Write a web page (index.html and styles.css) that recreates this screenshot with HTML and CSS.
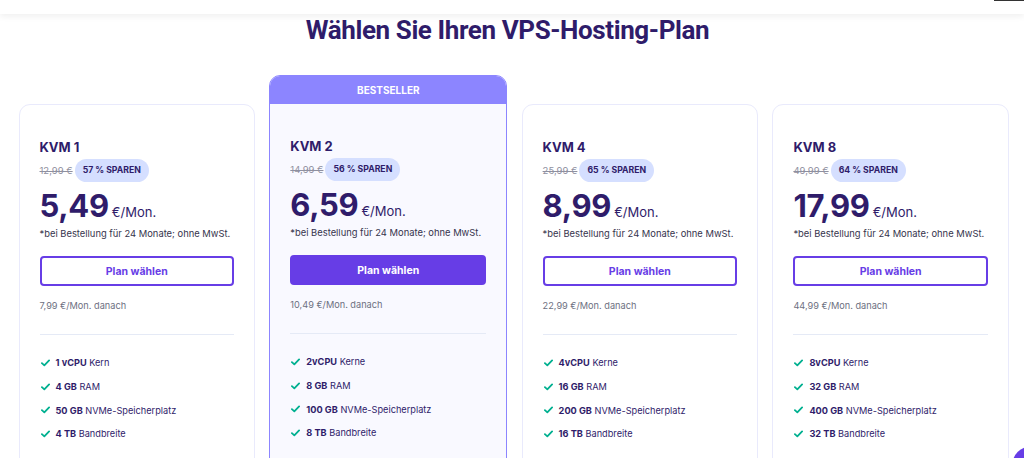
FILE: index.html
```html
<!DOCTYPE html>
<html lang="de">
<head>
<meta charset="utf-8">
<title>VPS-Hosting-Plan</title>
<link rel="stylesheet" href="styles.css">
</head>
<body>
<div class="topbar"><span class="topline"></span></div>
<h1 class="heading">Wählen Sie Ihren VPS-Hosting-Plan</h1>
<div class="plans">
  <div class="card">
    <div class="card-body">
      <div class="plan-name">KVM 1</div>
      <div class="price-row"><span class="old">12,99 €</span><span class="badge">57 % SPAREN</span></div>
      <div class="price"><span class="amount">5,49</span><span class="unit">€/Mon.</span></div>
      <div class="note">*bei Bestellung für 24 Monate; ohne MwSt.</div>
      <button class="btn">Plan wählen</button>
      <div class="renew">7,99 €/Mon. danach</div>
      <hr class="sep">
      <ul class="features">
        <li><svg class="check" viewBox="0 0 10 8"><path d="M1 4.2 3.7 6.6 9 1.2"/></svg><b>1 vCPU</b>&nbsp;Kern</li>
        <li><svg class="check" viewBox="0 0 10 8"><path d="M1 4.2 3.7 6.6 9 1.2"/></svg><b>4 GB</b>&nbsp;RAM</li>
        <li><svg class="check" viewBox="0 0 10 8"><path d="M1 4.2 3.7 6.6 9 1.2"/></svg><b>50 GB</b>&nbsp;NVMe-Speicherplatz</li>
        <li><svg class="check" viewBox="0 0 10 8"><path d="M1 4.2 3.7 6.6 9 1.2"/></svg><b>4 TB</b>&nbsp;Bandbreite</li>
      </ul>
    </div>
  </div>
  <div class="card featured">
    <div class="ribbon">BESTSELLER</div>
    <div class="card-body">
      <div class="plan-name">KVM 2</div>
      <div class="price-row"><span class="old">14,99 €</span><span class="badge">56 % SPAREN</span></div>
      <div class="price"><span class="amount">6,59</span><span class="unit">€/Mon.</span></div>
      <div class="note">*bei Bestellung für 24 Monate; ohne MwSt.</div>
      <button class="btn btn-filled">Plan wählen</button>
      <div class="renew">10,49 €/Mon. danach</div>
      <hr class="sep">
      <ul class="features">
        <li><svg class="check" viewBox="0 0 10 8"><path d="M1 4.2 3.7 6.6 9 1.2"/></svg><b>2vCPU</b>&nbsp;Kerne</li>
        <li><svg class="check" viewBox="0 0 10 8"><path d="M1 4.2 3.7 6.6 9 1.2"/></svg><b>8 GB</b>&nbsp;RAM</li>
        <li><svg class="check" viewBox="0 0 10 8"><path d="M1 4.2 3.7 6.6 9 1.2"/></svg><b>100 GB</b>&nbsp;NVMe-Speicherplatz</li>
        <li><svg class="check" viewBox="0 0 10 8"><path d="M1 4.2 3.7 6.6 9 1.2"/></svg><b>8 TB</b>&nbsp;Bandbreite</li>
      </ul>
    </div>
  </div>
  <div class="card">
    <div class="card-body">
      <div class="plan-name">KVM 4</div>
      <div class="price-row"><span class="old">25,99 €</span><span class="badge">65 % SPAREN</span></div>
      <div class="price"><span class="amount">8,99</span><span class="unit">€/Mon.</span></div>
      <div class="note">*bei Bestellung für 24 Monate; ohne MwSt.</div>
      <button class="btn">Plan wählen</button>
      <div class="renew">22,99 €/Mon. danach</div>
      <hr class="sep">
      <ul class="features">
        <li><svg class="check" viewBox="0 0 10 8"><path d="M1 4.2 3.7 6.6 9 1.2"/></svg><b>4vCPU</b>&nbsp;Kerne</li>
        <li><svg class="check" viewBox="0 0 10 8"><path d="M1 4.2 3.7 6.6 9 1.2"/></svg><b>16 GB</b>&nbsp;RAM</li>
        <li><svg class="check" viewBox="0 0 10 8"><path d="M1 4.2 3.7 6.6 9 1.2"/></svg><b>200 GB</b>&nbsp;NVMe-Speicherplatz</li>
        <li><svg class="check" viewBox="0 0 10 8"><path d="M1 4.2 3.7 6.6 9 1.2"/></svg><b>16 TB</b>&nbsp;Bandbreite</li>
      </ul>
    </div>
  </div>
  <div class="card">
    <div class="card-body">
      <div class="plan-name">KVM 8</div>
      <div class="price-row"><span class="old">49,99 €</span><span class="badge">64 % SPAREN</span></div>
      <div class="price"><span class="amount">17,99</span><span class="unit">€/Mon.</span></div>
      <div class="note">*bei Bestellung für 24 Monate; ohne MwSt.</div>
      <button class="btn">Plan wählen</button>
      <div class="renew">44,99 €/Mon. danach</div>
      <hr class="sep">
      <ul class="features">
        <li><svg class="check" viewBox="0 0 10 8"><path d="M1 4.2 3.7 6.6 9 1.2"/></svg><b>8vCPU</b>&nbsp;Kerne</li>
        <li><svg class="check" viewBox="0 0 10 8"><path d="M1 4.2 3.7 6.6 9 1.2"/></svg><b>32 GB</b>&nbsp;RAM</li>
        <li><svg class="check" viewBox="0 0 10 8"><path d="M1 4.2 3.7 6.6 9 1.2"/></svg><b>400 GB</b>&nbsp;NVMe-Speicherplatz</li>
        <li><svg class="check" viewBox="0 0 10 8"><path d="M1 4.2 3.7 6.6 9 1.2"/></svg><b>32 TB</b>&nbsp;Bandbreite</li>
      </ul>
    </div>
  </div>
</div>
<div class="chat-bubble"></div>
</body>
</html>
```
FILE: styles.css
```css
* { box-sizing: border-box; }
html, body { margin: 0; padding: 0; background: #fff; overflow: hidden; }
body {
  width: 1024px;
  height: 458px;
  font-family: "Inter", "Roboto", sans-serif;
  color: #2f1c6a;
  position: relative;
}
.topbar {
  height: 14px;
  background: #fff;
  box-shadow: 0 2px 7px rgba(0, 0, 0, 0.07);
  position: relative;
  z-index: 2;
}
.topline {
  position: absolute;
  right: 0;
  top: 0;
  width: 30px;
  height: 1px;
  background: #333;
}
.heading {
  margin: 2px 0 0;
  padding-right: 9px;
  text-align: center;
  font-family: "Roboto", "Inter", sans-serif;
  font-weight: 700;
  font-size: 26px;
  line-height: 28px;
  letter-spacing: -0.4px;
  color: #2f1c6a;
}
.plans {
  display: grid;
  grid-template-columns: 236.5px 238px 236.5px 236.5px;
  column-gap: 14.3px;
  padding-left: 18.5px;
  margin-top: 31px;
  align-items: start;
}
.card {
  border: 1px solid #e9eafc;
  border-radius: 11px;
  background: #fff;
  margin-top: 29px;
  height: 400px;
  overflow: hidden;
}
.card.featured {
  margin-top: 0;
  border-color: #8c85ff;
  background: #f9f9ff;
  height: 429px;
}
.ribbon {
  height: 28px;
  background: #8c85ff;
  color: #fff;
  font-size: 10px;
  font-weight: 700;
  letter-spacing: 0;
  text-align: center;
  line-height: 28px;
}
.card-body {
  padding: 32px 20px 0;
}
.plan-name {
  font-size: 13px;
  font-weight: 700;
  line-height: 20px;
}
.price-row {
  display: flex;
  align-items: center;
  gap: 2px;
  margin-top: 2px;
  height: 23px;
}
.old {
  font-size: 9.5px;
  color: #8f90a0;
  text-decoration: line-through;
}
.badge {
  height: 23px;
  line-height: 23px;
  padding: 0 8px;
  border-radius: 12px;
  background: #d5dfff;
  font-size: 8.7px;
  font-weight: 700;
  color: #2f1c6a;
}
.price {
  margin-top: 7px;
  display: flex;
  align-items: baseline;
  height: 34px;
}
.amount {
  font-size: 31px;
  line-height: 34px;
  font-weight: 700;
  letter-spacing: -0.3px;
}
.unit {
  font-size: 13px;
  line-height: 14px;
  margin-left: 3px;
  color: #2f1c6a;
}
.note {
  margin-top: 3px;
  font-size: 9.4px;
  line-height: 16px;
  color: #36344d;
}
.btn {
  display: block;
  width: 100%;
  height: 30px;
  margin-top: 14px;
  border: 2px solid #673de6;
  border-radius: 4px;
  background: #fff;
  color: #673de6;
  font-family: inherit;
  font-size: 10.5px;
  font-weight: 700;
  cursor: pointer;
}
.btn-filled {
  background: #673de6;
  color: #fff;
}
.renew {
  margin-top: 13px;
  font-size: 9.2px;
  line-height: 14px;
  color: #6d7081;
}
.sep {
  margin: 21px 0 0;
  border: 0;
  border-top: 1px solid #e5eaf6;
}
.features {
  list-style: none;
  margin: 16px 0 0;
  padding: 0;
}
.features li {
  display: flex;
  align-items: center;
  height: 23.7px;
  font-size: 9.2px;
  color: #2f1c6a;
}
.features b { font-weight: 700; }
.check {
  width: 9px;
  height: 8px;
  margin: 0 6px 0 1px;
  fill: none;
  stroke: #00b090;
  stroke-width: 2;
  stroke-linecap: round;
  stroke-linejoin: round;
}
.chat-bubble {
  position: absolute;
  left: 1012px;
  top: 446px;
  width: 40px;
  height: 40px;
  border-radius: 50%;
  background: #673de6;
}
```
